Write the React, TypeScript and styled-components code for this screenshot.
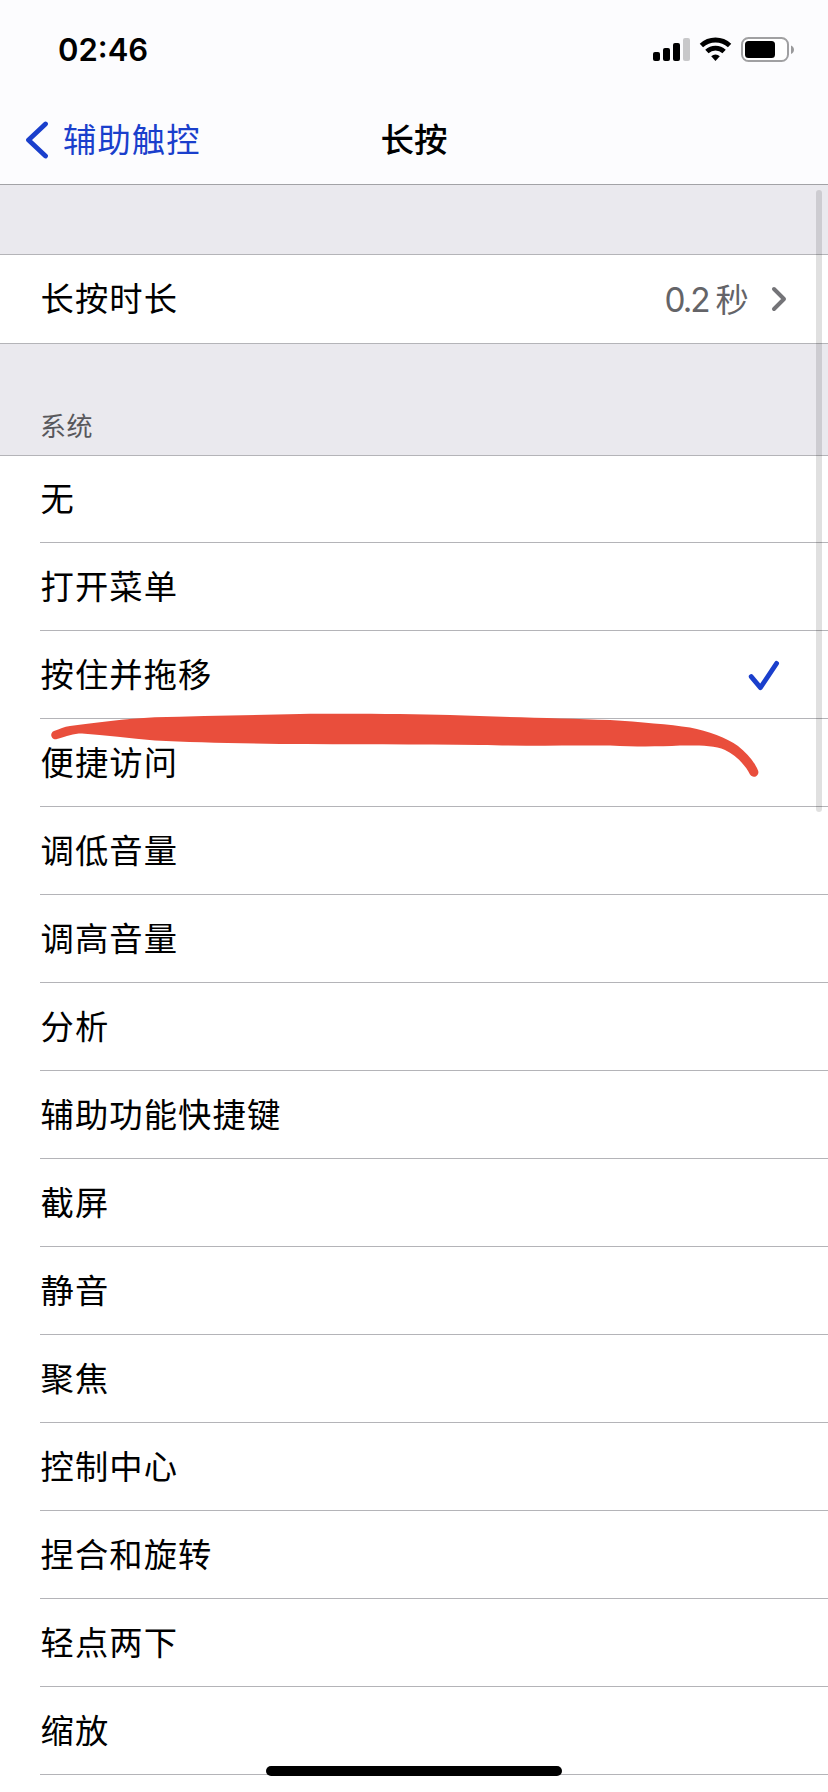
import React from "react";
import styled, { createGlobalStyle } from "styled-components";

const GlobalStyle = createGlobalStyle`
  * { box-sizing: border-box; }
  html, body { margin: 0; padding: 0; background: #fff; }
  body { overflow: hidden; }
`;

const LINE = "#b4b4b8";
const BLUE = "#1a3fcc";

const Screen = styled.div`
  position: relative;
  width: 828px;
  height: 1792px;
  overflow: hidden;
  display: flex;
  flex-direction: column;
  background: #fff;
  color: #000;
  font-family: Inter, "Noto Sans CJK SC", sans-serif;
  font-size: 33.3px;
  letter-spacing: 1.1px;
`;

const Header = styled.header`
  flex: none;
  height: 185px;
  background: #fcfcfe;
  border-bottom: 1px solid #a2a2a6;
`;

const StatusBar = styled.div`
  height: 97px;
  padding: 3px 34px 0 58px;
  display: flex;
  align-items: center;
  justify-content: space-between;
`;

const Clock = styled.span`
  font-size: 31px;
  font-weight: 600;
  line-height: 40px;
  letter-spacing: 0;
`;

const StatusIcons = styled.svg`
  display: block;
  width: 144px;
  height: 30px;
`;

const NavBar = styled.nav`
  height: 86px;
  padding: 0 24px;
  display: grid;
  grid-template-columns: 1fr auto 1fr;
  align-items: center;
`;

const BackButton = styled.a`
  display: flex;
  align-items: center;
  gap: 13px;
  color: ${BLUE};
  line-height: 50px;
`;

const Title = styled.h1`
  margin: 0;
  font-size: 33.5px;
  line-height: 50px;
  font-weight: 500;
  letter-spacing: 0;
`;

const SectionGap = styled.div<{ $height: number }>`
  flex: none;
  height: ${(p) => p.$height}px;
  padding: 0 40px 10px;
  display: flex;
  align-items: flex-end;
  background: #eae9ee;
  border-bottom: 1px solid ${LINE};
  color: #58585c;
  font-size: 26px;
  line-height: 36px;
  letter-spacing: 0.4px;
`;

const SettingRow = styled.div`
  flex: none;
  height: 89px;
  padding: 0 40px 0 40px;
  display: flex;
  align-items: center;
  border-bottom: 1px solid ${LINE};
`;

const Label = styled.span`
  padding: 0 0 5px 0.5px;
`;

const Value = styled.span`
  margin-left: auto;
  margin-right: 20px;
  padding-bottom: 3px;
  display: flex;
  align-items: baseline;
  gap: 7px;
  color: #646468;
`;

const Amount = styled.span`
  letter-spacing: -2px;
`;

const List = styled.ul`
  margin: 0;
  padding: 0 0 0 40px;
  list-style: none;
`;

const Option = styled.li`
  height: 88px;
  padding: 0 48px 0 0;
  display: flex;
  align-items: center;
  justify-content: space-between;
  border-bottom: 1px solid ${LINE};

  &:first-child { height: 87px; }
`;

const ScrollThumb = styled.div`
  position: absolute;
  top: 190px;
  left: 816px;
  width: 6px;
  height: 622px;
  border-radius: 3px;
  background: rgba(0, 0, 0, 0.12);
`;

const HomeIndicator = styled.div`
  position: absolute;
  left: 266px;
  bottom: 16px;
  width: 296px;
  height: 10px;
  border-radius: 5px;
  background: #000;
`;

const Stroke = styled.svg`
  position: absolute;
  left: 0;
  top: 700px;
`;

const options = [
  "无", "打开菜单", "按住并拖移", "便捷访问", "调低音量",
  "调高音量", "分析", "辅助功能快捷键", "截屏", "静音",
  "聚焦", "控制中心", "捏合和旋转", "轻点两下", "缩放",
];
const selected = "按住并拖移";

const Check = () => (
  <svg width="32" height="32" viewBox="0 0 32 32" fill="none" stroke={BLUE} strokeWidth="4.8" strokeLinecap="round" strokeLinejoin="round">
    <path d="M3.2 17.6 12.4 28.6 28.6 4.4" />
  </svg>
);

export default function App() {
  return (
    <>
      <GlobalStyle />
      <Screen>
        <Header>
          <StatusBar>
            <Clock>02:46</Clock>
            <StatusIcons viewBox="0 0 144 30">
              <rect x="3" y="17" width="7" height="9" rx="2" />
              <rect x="13" y="13" width="7" height="13" rx="2" />
              <rect x="23" y="8" width="7" height="18" rx="2" />
              <rect x="33" y="3" width="7" height="23" rx="2" fill="#c8c8ca" />
              <g fill="none" stroke="#000" strokeWidth="4.8">
                <path d="M51.4 10.6a20.5 20.5 0 0 1 28.2 0" />
                <path d="M56.9 16.5a12.5 12.5 0 0 1 17.2 0" />
              </g>
              <path d="M61.2 21.2a6.2 6.2 0 0 1 8.6 0L65.5 26z" />
              <rect x="92" y="3" width="46" height="23" rx="6.5" fill="#fff" stroke="#a0a0a2" strokeWidth="2" />
              <rect x="95" y="6" width="30" height="17" rx="3.5" />
              <path d="M141 10.5c4 1.5 4 7 0 8.500z" fill="#99999b" />
            </StatusIcons>
          </StatusBar>
          <NavBar>
            <BackButton>
              <svg width="26" height="38" viewBox="0 0 26 38" fill="none" stroke={BLUE} strokeWidth="4.8" strokeLinecap="round" strokeLinejoin="round">
                <path d="M21.500 3 4.500 19 21.500 35" />
              </svg>
              辅助触控
            </BackButton>
            <Title>长按</Title>
          </NavBar>
        </Header>
        <SectionGap $height={70} />
        <SettingRow>
          <Label>长按时长</Label>
          <Value><Amount>0.2</Amount><span>秒</span></Value>
          <svg width="18" height="28" viewBox="0 0 18 28" fill="none" stroke="#747478" strokeWidth="4" strokeLinecap="round" strokeLinejoin="round">
            <path d="M4 4 14 14 4 24" />
          </svg>
        </SettingRow>
        <SectionGap $height={112}>系统</SectionGap>
        <List>
          {options.map((name) => (
            <Option key={name}>
              <Label>{name}</Label>
              {name === selected && <Check />}
            </Option>
          ))}
        </List>
        <Stroke width="828" height="90" viewBox="0 700 828 90">
          <path
            fill="#e94e3c"
            d="M54 731C60 729 64 726.500 70 726C95 723 125 718.500 155 717.200C200 716 250 715 300 714C350 713.500 410 714 450 715C500 717 560 718 610 720C640 722 670 724.500 690 727.500C708 731 727 738 738 746C748 754 755 763 757.800 770A4.500 4.500 0 0 1 750 774.500C746 766 736 755 725 750C714 745 698 745.500 680 745.500C660 746.500 640 747 610 745.500C570 745.500 520 746 480 745C420 744.500 350 744.500 280 744C230 743 190 742.500 155 740.500C130 738 105 735.500 82 733.500C73 733.500 67 736 57 739A4.200 4.200 0 0 1 54 731Z"
          />
        </Stroke>
        <ScrollThumb />
        <HomeIndicator />
      </Screen>
    </>
  );
}
